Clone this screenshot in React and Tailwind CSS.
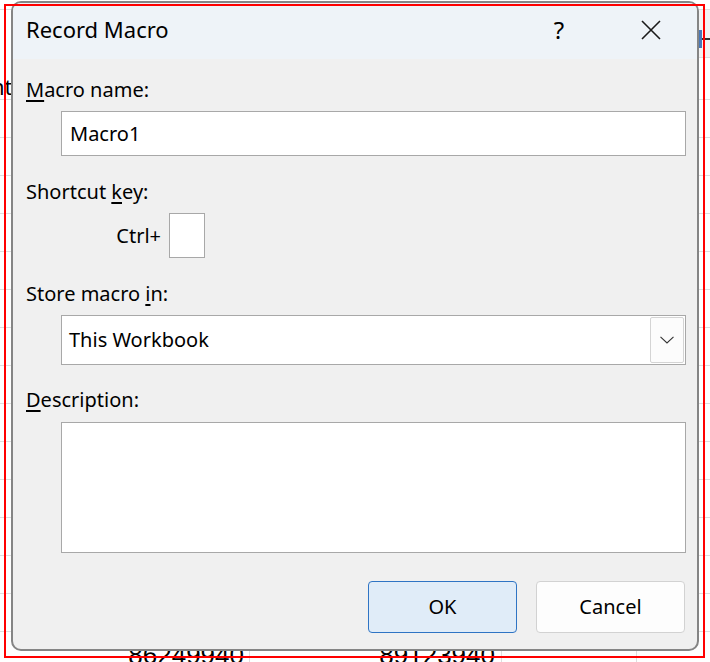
import React from "react";

const font = { fontFamily: '"Noto Sans", "Open Sans", sans-serif' };

function Label({ children, ul, rest }) {
  return (
    <div className="h-[28px] pl-[13px] text-[20px] leading-[28px] text-black">
      {children}
      <span className="underline decoration-[1.5px] underline-offset-[3px]">{ul}</span>
      {rest}
    </div>
  );
}

function GridRow({ h, children }) {
  return (
    <div className={`grid grid-cols-[250px_252px_135px_1fr] ${h} border-b border-[#dedede]`}>
      {children || (
        <>
          <div className="border-r border-[#dedede]" />
          <div className="border-r border-[#dedede]" />
          <div className="border-r border-[#dedede]" />
          <div />
        </>
      )}
    </div>
  );
}

export default function App() {
  const rows = Array.from({ length: 14 });
  return (
    <div className="relative h-[662px] w-[710px] overflow-hidden bg-white" style={font}>
      {/* spreadsheet behind the dialog */}
      <div className="flex flex-col">
        <div className="h-[10px] border-b border-[#dedede]" />
        <GridRow h="h-[90px]">
          <div className="border-r border-[#dedede] pt-[62px] text-[22px] leading-[28px] text-black">
            <span className="-ml-[9px]">nt</span>
          </div>
          <div className="border-r border-[#dedede]" />
          <div className="border-r border-[#dedede]" />
          <div>
            <div className="flex h-[48px] items-center border-b border-[#dedede] bg-[#f3f3f3] pl-[62px] pt-[10px]">
              <div className="h-[18px] w-[3px] bg-[#4a78b8]" />
              <div className="h-[2px] w-[8px] bg-[#333]" />
            </div>
          </div>
        </GridRow>
        {rows.map((_, i) => (
          <GridRow key={i} h="h-[38px]" />
        ))}
        <div
          className="grid h-[38px] grid-cols-[250px_252px_135px_1fr] text-[26px] leading-[38px] text-black"
          style={{ fontFamily: '"Liberation Sans", sans-serif' }}
        >
          <div className="border-r border-[#dedede] pr-[5px] pt-[4px] text-right">86249940</div>
          <div className="border-r border-[#dedede] pr-[6px] pt-[4px] text-right">89123940</div>
          <div className="border-r border-[#dedede]" />
          <div />
        </div>
      </div>

      {/* dialog window */}
      <div className="absolute left-[11px] top-[1px] flex h-[650px] w-[688px] flex-col overflow-hidden rounded-[10px] border-2 border-[#858585] bg-[#f0f0f0]">
        <div className="flex h-[56px] shrink-0 items-center bg-[#eef3f8] pb-[3px] pl-[13px]">
          <div className="flex-1 text-[22px] text-black">Record Macro</div>
          <div className="w-[24px] text-center text-[24px] text-black">?</div>
          <div className="ml-[70px] mr-[36px] flex h-[20px] w-[20px] items-center justify-center">
            <svg width="20" height="20" viewBox="0 0 20 20">
              <path d="M1 1 L19 19 M19 1 L1 19" stroke="#1a1a1a" strokeWidth="1.6" fill="none" />
            </svg>
          </div>
        </div>

        <div className="flex flex-1 flex-col pt-[17px]">
          <Label ul="M" rest="acro name:" />
          <div className="ml-[48px] mr-[11px] mt-[7px] flex h-[45px] items-center border border-[#a8a8a8] bg-white pl-[8px] text-[20px] text-black">
            Macro1
          </div>

          <div className="mt-[22px]">
            <Label>
              Shortcut <span className="underline decoration-[1.5px] underline-offset-[3px]">k</span>ey:
            </Label>
          </div>
          <div className="mt-[7px] flex items-center pl-[13px]">
            <div className="w-[135px] text-right text-[20px] text-black">Ctrl+</div>
            <div className="ml-[8px] h-[45px] w-[36px] border border-[#a8a8a8] bg-white" />
          </div>

          <div className="mt-[22px]">
            <Label>
              Store macro <span className="underline decoration-[1.5px] underline-offset-[3px]">i</span>n:
            </Label>
          </div>
          <div className="ml-[48px] mr-[11px] mt-[7px] flex h-[50px] items-center border border-[#a8a8a8] bg-white pl-[7px] text-[20px] text-black">
            <div className="flex-1">This Workbook</div>
            <div className="mr-[1px] flex h-[46px] w-[34px] items-center justify-center rounded-[2px] border border-[#d4d4d4] bg-[#fcfcfc]">
              <svg width="14" height="8" viewBox="0 0 14 8">
                <path d="M0.5 0.8 L7 7 L13.5 0.8" stroke="#333" strokeWidth="1.1" fill="none" />
              </svg>
            </div>
          </div>

          <div className="mt-[21px]">
            <Label ul="D" rest="escription:" />
          </div>
          <div className="ml-[48px] mr-[11px] mt-[8px] h-[131px] border border-[#a8a8a8] bg-white" />

          <div className="mr-[12px] mt-[28px] flex justify-end gap-[19px]">
            <button className="h-[52px] w-[149px] rounded-[4px] border border-[#2f74c4] bg-[#e0ecf8] text-[20px] text-black">
              OK
            </button>
            <button className="h-[52px] w-[149px] rounded-[4px] border border-[#d2d2d2] bg-[#fdfdfd] text-[20px] text-black">
              Cancel
            </button>
          </div>
        </div>
      </div>

      {/* red annotation frame */}
      <div className="pointer-events-none absolute left-[4px] top-[4px] h-[654px] w-[701px] border-2 border-[#ff0000]" />
    </div>
  );
}
